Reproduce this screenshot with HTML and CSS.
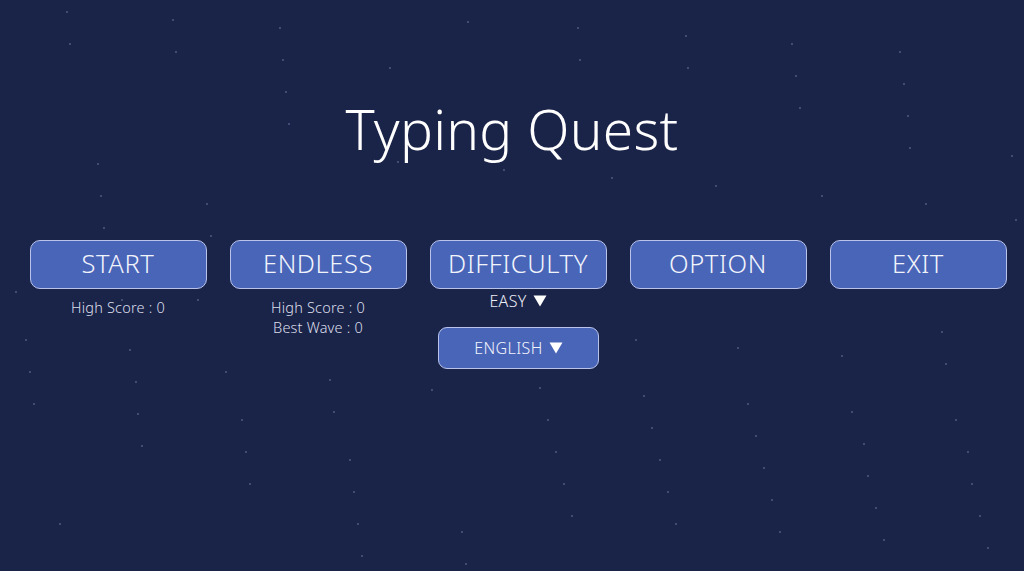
FILE: index.html
```html
<!DOCTYPE html>
<html lang="en">
<head>
<meta charset="utf-8">
<title>Typing Quest</title>
<link rel="stylesheet" href="styles.css">
</head>
<body>
<div class="screen">
  <svg class="stars" width="1024" height="571" viewBox="0 0 1024 571" aria-hidden="true">
    <g fill="#56618c">
      <circle cx="67" cy="12" r="0.9"/><circle cx="173" cy="20" r="0.9"/><circle cx="280" cy="28" r="0.9"/>
      <circle cx="70" cy="44" r="0.9"/><circle cx="176" cy="52" r="0.9"/><circle cx="283" cy="60" r="0.9"/>
      <circle cx="286" cy="92" r="0.9"/><circle cx="289" cy="124" r="0.9"/><circle cx="98" cy="164" r="0.9"/>
      <circle cx="101" cy="196" r="0.9"/><circle cx="207" cy="204" r="0.9"/><circle cx="104" cy="228" r="0.9"/>
      <circle cx="211" cy="236" r="0.9"/><circle cx="194" cy="262" r="0.9"/><circle cx="198" cy="300" r="0.9"/>
      <circle cx="26" cy="340" r="0.9"/><circle cx="130" cy="350" r="0.9"/><circle cx="30" cy="372" r="0.9"/>
      <circle cx="136" cy="382" r="0.9"/><circle cx="34" cy="404" r="0.9"/><circle cx="138" cy="414" r="0.9"/>
      <circle cx="242" cy="420" r="0.9"/><circle cx="142" cy="446" r="0.9"/><circle cx="246" cy="452" r="0.9"/>
      <circle cx="350" cy="460" r="0.9"/><circle cx="250" cy="484" r="0.9"/><circle cx="354" cy="492" r="0.9"/>
      <circle cx="60" cy="524" r="0.9"/><circle cx="358" cy="524" r="0.9"/><circle cx="462" cy="532" r="0.9"/>
      <circle cx="466" cy="564" r="0.9"/><circle cx="362" cy="556" r="0.9"/><circle cx="468" cy="22" r="0.9"/>
      <circle cx="578" cy="28" r="0.9"/><circle cx="686" cy="36" r="0.9"/><circle cx="792" cy="44" r="0.9"/>
      <circle cx="900" cy="52" r="0.9"/><circle cx="580" cy="60" r="0.9"/><circle cx="688" cy="68" r="0.9"/>
      <circle cx="796" cy="76" r="0.9"/><circle cx="904" cy="84" r="0.9"/><circle cx="390" cy="68" r="0.9"/>
      <circle cx="800" cy="108" r="0.9"/><circle cx="908" cy="116" r="0.9"/><circle cx="910" cy="148" r="0.9"/>
      <circle cx="1012" cy="156" r="0.9"/><circle cx="398" cy="162" r="0.9"/><circle cx="504" cy="170" r="0.9"/>
      <circle cx="612" cy="178" r="0.9"/><circle cx="716" cy="186" r="0.9"/><circle cx="822" cy="196" r="0.9"/>
      <circle cx="926" cy="204" r="0.9"/><circle cx="1016" cy="220" r="0.9"/><circle cx="942" cy="332" r="0.9"/>
      <circle cx="946" cy="364" r="0.9"/><circle cx="842" cy="356" r="0.9"/><circle cx="738" cy="348" r="0.9"/>
      <circle cx="636" cy="340" r="0.9"/><circle cx="540" cy="388" r="0.9"/><circle cx="644" cy="396" r="0.9"/>
      <circle cx="748" cy="404" r="0.9"/><circle cx="852" cy="412" r="0.9"/><circle cx="956" cy="420" r="0.9"/>
      <circle cx="548" cy="420" r="0.9"/><circle cx="652" cy="428" r="0.9"/><circle cx="756" cy="436" r="0.9"/>
      <circle cx="864" cy="444" r="0.9"/><circle cx="968" cy="452" r="0.9"/><circle cx="556" cy="452" r="0.9"/>
      <circle cx="660" cy="460" r="0.9"/><circle cx="764" cy="468" r="0.9"/><circle cx="868" cy="476" r="0.9"/>
      <circle cx="972" cy="484" r="0.9"/><circle cx="564" cy="484" r="0.9"/><circle cx="668" cy="492" r="0.9"/>
      <circle cx="772" cy="500" r="0.9"/><circle cx="876" cy="508" r="0.9"/><circle cx="980" cy="516" r="0.9"/>
      <circle cx="572" cy="516" r="0.9"/><circle cx="676" cy="524" r="0.9"/><circle cx="780" cy="532" r="0.9"/>
      <circle cx="884" cy="540" r="0.9"/><circle cx="988" cy="548" r="0.9"/><circle cx="440" cy="362" r="0.9"/>
      <circle cx="432" cy="390" r="0.9"/><circle cx="330" cy="380" r="0.9"/><circle cx="334" cy="412" r="0.9"/>
      <circle cx="226" cy="372" r="0.9"/><circle cx="122" cy="300" r="0.9"/><circle cx="16" cy="292" r="0.9"/>
    </g>
  </svg>

  <h1 class="title">Typing Quest</h1>

  <div class="menu">
    <div class="col">
      <button class="btn">START</button>
      <div class="info">
        <span>High Score : 0</span>
      </div>
    </div>
    <div class="col">
      <button class="btn">ENDLESS</button>
      <div class="info">
        <span>High Score : 0</span>
        <span>Best Wave : 0</span>
      </div>
    </div>
    <div class="col">
      <button class="btn">DIFFICULTY</button>
      <div class="select">EASY <svg class="tri" width="14" height="12" viewBox="0 0 14 12"><path d="M0.5 0.5H13.5L7 11.5Z" fill="#ffffff"/></svg></div>
      <button class="btn small">ENGLISH <svg class="tri" width="14" height="12" viewBox="0 0 14 12"><path d="M0.5 0.5H13.5L7 11.5Z" fill="#ffffff"/></svg></button>
    </div>
    <div class="col">
      <button class="btn">OPTION</button>
    </div>
    <div class="col">
      <button class="btn">EXIT</button>
    </div>
  </div>
</div>
</body>
</html>
```

FILE: styles.css
```css
html, body {
  margin: 0;
  padding: 0;
  background: #1a2348;
}

.screen {
  position: relative;
  width: 1024px;
  height: 571px;
  overflow: hidden;
  background: #1a2348;
  font-family: "Noto Sans", "Open Sans", sans-serif;
  color: #ffffff;
  display: flex;
  flex-direction: column;
}

.stars {
  position: absolute;
  left: 0;
  top: 0;
  z-index: 0;
}

.title {
  position: relative;
  z-index: 1;
  margin: 84px 0 0 0;
  height: 90px;
  line-height: 90px;
  text-align: center;
  font-size: 55px;
  font-weight: 300;
  letter-spacing: 0.3px;
  color: #ffffff;
}

.menu {
  position: relative;
  z-index: 1;
  margin-top: 66px;
  padding-left: 30px;
  display: grid;
  grid-template-columns: repeat(5, 176px);
  column-gap: 24px;
  align-items: start;
}

.col {
  display: flex;
  flex-direction: column;
  align-items: center;
}

.btn {
  width: 177px;
  height: 49px;
  box-sizing: border-box;
  background: #4965b8;
  border: 1px solid #b9c4ec;
  border-radius: 10px;
  color: #f2f4fc;
  font-family: "Noto Sans", "Open Sans", sans-serif;
  font-size: 25.5px;
  font-weight: 300;
  letter-spacing: 0.6px;
  padding: 0 0 4px 0;
  display: flex;
  align-items: center;
  justify-content: center;
  gap: 6px;
}

.btn.small {
  width: 161px;
  height: 42px;
  font-size: 16px;
  font-weight: 300;
  letter-spacing: 0.4px;
  padding: 0 0 1px 0;
  margin-top: 15px;
  margin-left: 1px;
  border-radius: 9px;
  gap: 6px;
}

.info {
  margin-top: 8px;
  display: flex;
  flex-direction: column;
  align-items: center;
  font-size: 14.5px;
  font-weight: 300;
  line-height: 20px;
  letter-spacing: 0.2px;
  color: #dcdfec;
}

.select {
  margin-top: 1px;
  height: 22px;
  display: flex;
  align-items: center;
  gap: 6px;
  font-size: 16px;
  font-weight: 300;
  letter-spacing: 0.3px;
  color: #eceef6;
}

.tri {
  display: block;
}
```
